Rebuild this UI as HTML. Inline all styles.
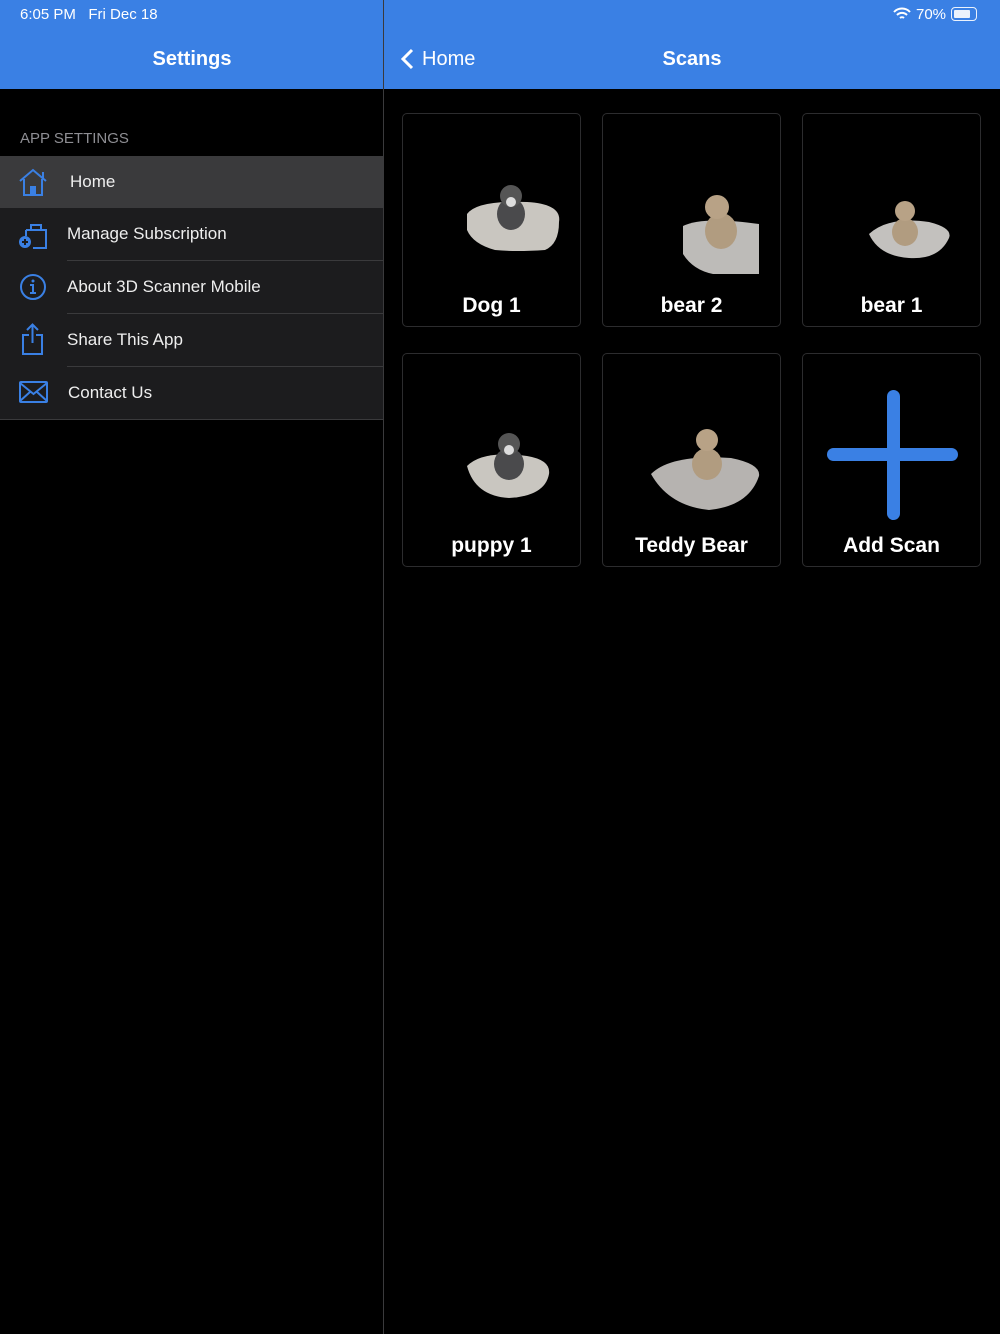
<!DOCTYPE html>
<html><head><meta charset="utf-8"><style>
*{margin:0;padding:0;box-sizing:border-box}
body{width:1000px;height:1334px;background:#000;font-family:"Liberation Sans",sans-serif;position:relative;overflow:hidden;color:#fff}
.hdr{position:absolute;top:0;left:0;width:1000px;height:89px;background:#3a80e4}
.divv{position:absolute;left:383px;top:0;width:1px;height:1334px;background:#3a3a3c}
.t{position:absolute;white-space:nowrap}
.row{position:absolute;left:0;width:383px;height:53px;background:#1c1c1e}
.row .lb{position:absolute;left:67px;top:16px;font-size:17px;color:#eee}
.sep{position:absolute;left:67px;width:316px;height:1px;background:#3a3a3c}
.card{position:absolute;width:179px;height:214px;border:1px solid #2c2c2e;border-radius:5px;background:#000}
.card .n{position:absolute;left:0;right:0;bottom:8px;text-align:center;font-size:21px;font-weight:bold}
</style></head><body>
<div class="hdr"></div>
<div class="divv"></div>
<div class="t" style="left:20px;top:6px;font-size:15px">6:05 PM&nbsp;&nbsp;&nbsp;Fri Dec 18</div>
<div class="t" style="left:916px;top:6px;font-size:15px">70%</div>
<svg style="position:absolute;left:893px;top:7px" width="18" height="14" viewBox="0 0 18 14"><path d="M1 5a11 11 0 0 1 16 0M4 8a7 7 0 0 1 10 0M7 11a3 3 0 0 1 4 0" stroke="#fff" stroke-width="2" fill="none"/></svg>
<div style="position:absolute;left:951px;top:7px;width:26px;height:14px;border:1.5px solid #fff;border-radius:4px;opacity:.9"><div style="margin:1.5px;width:16px;height:8px;background:#fff;border-radius:1px"></div></div>
<div class="t" style="left:0;width:384px;text-align:center;top:48px;font-size:20px;font-weight:bold">Settings</div>
<div class="t" style="left:384px;width:616px;text-align:center;top:48px;font-size:20px;font-weight:bold">Scans</div>
<svg style="position:absolute;left:399px;top:48px" width="16" height="22"><path d="M13 2L4 11l9 9" stroke="#fff" stroke-width="3" fill="none"/></svg>
<div class="t" style="left:422px;top:48px;font-size:20px">Home</div>
<div class="t" style="left:20px;top:130px;font-size:15px;color:#8e8e93">APP SETTINGS</div>
<div class="row" style="top:156px;height:52px;background:#3a3a3c"><div class="lb" style="left:70px">Home</div>
<svg style="position:absolute;left:18px;top:12px" width="32" height="28" viewBox="0 0 32 28"><path d="M2 13L15 2l13 11M25 4v7M6 11v16h18V11" stroke="#3a80e4" stroke-width="2" fill="none"/><rect x="12" y="18" width="6" height="9" fill="#3a80e4"/></svg></div>
<div class="row" style="top:208px"><div class="lb">Manage Subscription</div>
<svg style="position:absolute;left:17px;top:12px" width="32" height="30"><path d="M9 10h20v18H16M9 10v6M14 10V5h10v5" stroke="#3a80e4" stroke-width="2" fill="none"/><circle cx="8" cy="22" r="6" fill="#3a80e4"/><path d="M8 19v6M5 22h6" stroke="#1c1c1e" stroke-width="2"/></svg></div>
<div class="sep" style="top:260px"></div>
<div class="row" style="top:261px"><div class="lb">About 3D Scanner Mobile</div>
<svg style="position:absolute;left:19px;top:12px" width="30" height="30"><circle cx="14" cy="14" r="12" stroke="#3a80e4" stroke-width="2" fill="none"/><circle cx="14" cy="8" r="1.5" fill="#3a80e4"/><path d="M11 12h3v8M11 20h6" stroke="#3a80e4" stroke-width="2" fill="none"/></svg></div>
<div class="sep" style="top:313px"></div>
<div class="row" style="top:314px"><div class="lb">Share This App</div>
<svg style="position:absolute;left:20px;top:9px" width="28" height="34"><path d="M9 12H3v19h19V12h-6M12.5 2v18M7 7l5.5-5.5L18 7" stroke="#3a80e4" stroke-width="2" fill="none"/></svg></div>
<div class="sep" style="top:366px"></div>
<div class="row" style="top:367px"><div class="lb" style="left:68px">Contact Us</div>
<svg style="position:absolute;left:19px;top:14px" width="30" height="24"><rect x="1" y="1" width="27" height="20" rx="1" stroke="#3a80e4" stroke-width="2" fill="none"/><path d="M1 2l13.5 11L28 2M1 20l10-9M28 20l-10-9" stroke="#3a80e4" stroke-width="2" fill="none"/></svg></div>
<div class="sep" style="top:419px;left:0;width:383px"></div>

<div class="card" style="left:402px;top:113px"><svg width="179" height="180" style="position:absolute;left:0;top:0"><path d="M64 100q10-14 60-12q35 2 32 20q0 22-14 28q-30 2-50 0q-22-6-28-20z" fill="#c9c6c0"/><ellipse cx="108" cy="100" rx="14" ry="16" fill="#4a4a4c"/><circle cx="108" cy="82" r="11" fill="#555"/><circle cx="108" cy="88" r="5" fill="#ddd"/></svg><div class="n">Dog 1</div></div>
<div class="card" style="left:602px;top:113px"><svg width="179" height="180" style="position:absolute;left:0;top:0"><path d="M80 112q20-10 76-2v50H110q-20-4-30-20z" fill="#bdbbb8"/><ellipse cx="118" cy="117" rx="16" ry="18" fill="#b19c80"/><circle cx="114" cy="93" r="12" fill="#b8a286"/></svg><div class="n">bear 2</div></div>
<div class="card" style="left:802px;top:113px"><svg width="179" height="180" style="position:absolute;left:0;top:0"><path d="M66 120q20-18 60-12q24 6 20 16q-10 22-40 20q-30-2-40-24z" fill="#c3c1be"/><ellipse cx="102" cy="118" rx="13" ry="14" fill="#b19c80"/><circle cx="102" cy="97" r="10" fill="#b8a286"/></svg><div class="n">bear 1</div></div>
<div class="card" style="left:402px;top:353px"><svg width="179" height="180" style="position:absolute;left:0;top:0"><path d="M64 112q16-16 60-10q24 4 22 18q-4 22-40 24q-34-2-42-32z" fill="#c9c6c0"/><ellipse cx="106" cy="110" rx="15" ry="16" fill="#4a4a4c"/><circle cx="106" cy="90" r="11" fill="#555"/><circle cx="106" cy="96" r="5" fill="#ddd"/></svg><div class="n">puppy 1</div></div>
<div class="card" style="left:602px;top:353px"><svg width="179" height="180" style="position:absolute;left:0;top:0"><path d="M48 120q20-20 80-16q30 6 28 18q-10 30-50 34q-40-4-58-36z" fill="#b6b3b0"/><ellipse cx="104" cy="110" rx="15" ry="16" fill="#b19c80"/><circle cx="104" cy="86" r="11" fill="#b8a286"/></svg><div class="n">Teddy Bear</div></div>
<div class="card" style="left:802px;top:353px"><div style="position:absolute;left:84px;top:36px;width:13px;height:130px;background:#3a80e4;border-radius:7px"></div><div style="position:absolute;left:24px;top:94px;width:131px;height:13px;background:#3a80e4;border-radius:7px"></div><div class="n">Add Scan</div></div>
</body></html>
